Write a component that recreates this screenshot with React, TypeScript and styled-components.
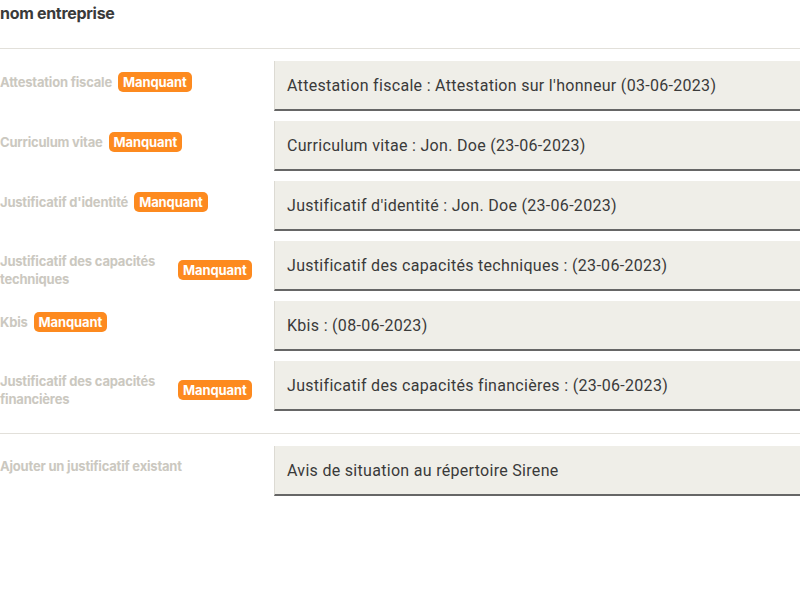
import React from "react";
import styled, {createGlobalStyle} from "styled-components";

const GlobalStyle = createGlobalStyle`
  html, body {
    margin: 0;
    padding: 0;
    background: #ffffff;
  }
  body {
    font-family: Inter, "Liberation Sans", sans-serif;
    color: #3a3a3a;
  }
`;

const Page = styled.div`
  width: 800px;
  overflow: hidden;
`;

const Title = styled.h1`
  margin: 0;
  padding: 4px 0 0;
  height: 44px;
  font-size: 16px;
  font-weight: 700;
  letter-spacing: -0.3px;
  line-height: 18px;
  color: #3a3a3a;
`;

const Divider = styled.hr`
  border: none;
  border-top: 1px solid #e2e0da;
  margin: 0 0 12px;
`;

const Section = styled.div`
  display: flex;
  flex-direction: column;
  gap: 10px;
`;

const Row = styled.div`
  display: grid;
  grid-template-columns: 274px 1fr;
  height: 50px;
`;

const Left = styled.div`
  display: flex;
  align-items: center;
  gap: 6px;
  padding-top: 11px;
  align-self: start;
`;

const Label = styled.span<{$wide?: boolean}>`
  max-width: ${p => (p.$wide ? "none" : "172px")};
  white-space: ${p => (p.$wide ? "nowrap" : "normal")};
  font-size: 13px;
  font-weight: 700;
  letter-spacing: -0.2px;
  line-height: 18px;
  color: #cbc8c0;
`;

const Badge = styled.span`
  flex-shrink: 0;
  background: #fd8a1f;
  color: #ffffff;
  font-size: 13px;
  font-weight: 700;
  letter-spacing: -0.1px;
  line-height: 20px;
  height: 20px;
  padding: 0 5px;
  border-radius: 5px;
`;

const Field = styled.div`
  box-sizing: border-box;
  height: 50px;
  display: flex;
  align-items: center;
  padding: 1px 12px 0;
  background: #efeee8;
  border-left: 1px solid #dcdad3;
  border-bottom: 2px solid #666666;
  font-family: Roboto, "Liberation Sans", sans-serif;
  font-size: 16px;
  letter-spacing: 0.3px;
  color: #3a3a3a;
  white-space: nowrap;
`;

const SecondDivider = styled(Divider)`
  margin: 22px 0 12px;
`;

const docs = [
  {label: "Attestation fiscale", value: "Attestation fiscale : Attestation sur l'honneur (03-06-2023)"},
  {label: "Curriculum vitae", value: "Curriculum vitae : Jon. Doe (23-06-2023)"},
  {label: "Justificatif d'identité", value: "Justificatif d'identité : Jon. Doe (23-06-2023)"},
  {label: "Justificatif des capacités techniques", value: "Justificatif des capacités techniques : (23-06-2023)"},
  {label: "Kbis", value: "Kbis : (08-06-2023)"},
  {label: "Justificatif des capacités financières", value: "Justificatif des capacités financières : (23-06-2023)"},
];

export default function App() {
  return (
    <Page>
      <GlobalStyle/>
      <Title>nom entreprise</Title>
      <Divider/>
      <Section>
        {docs.map(d => (
          <Row key={d.label}>
            <Left>
              <Label>{d.label}</Label>
              <Badge>Manquant</Badge>
            </Left>
            <Field>{d.value}</Field>
          </Row>
        ))}
      </Section>
      <SecondDivider/>
      <Row>
        <Left>
          <Label $wide>Ajouter un justificatif existant</Label>
        </Left>
        <Field>Avis de situation au répertoire Sirene</Field>
      </Row>
    </Page>
  );
}
